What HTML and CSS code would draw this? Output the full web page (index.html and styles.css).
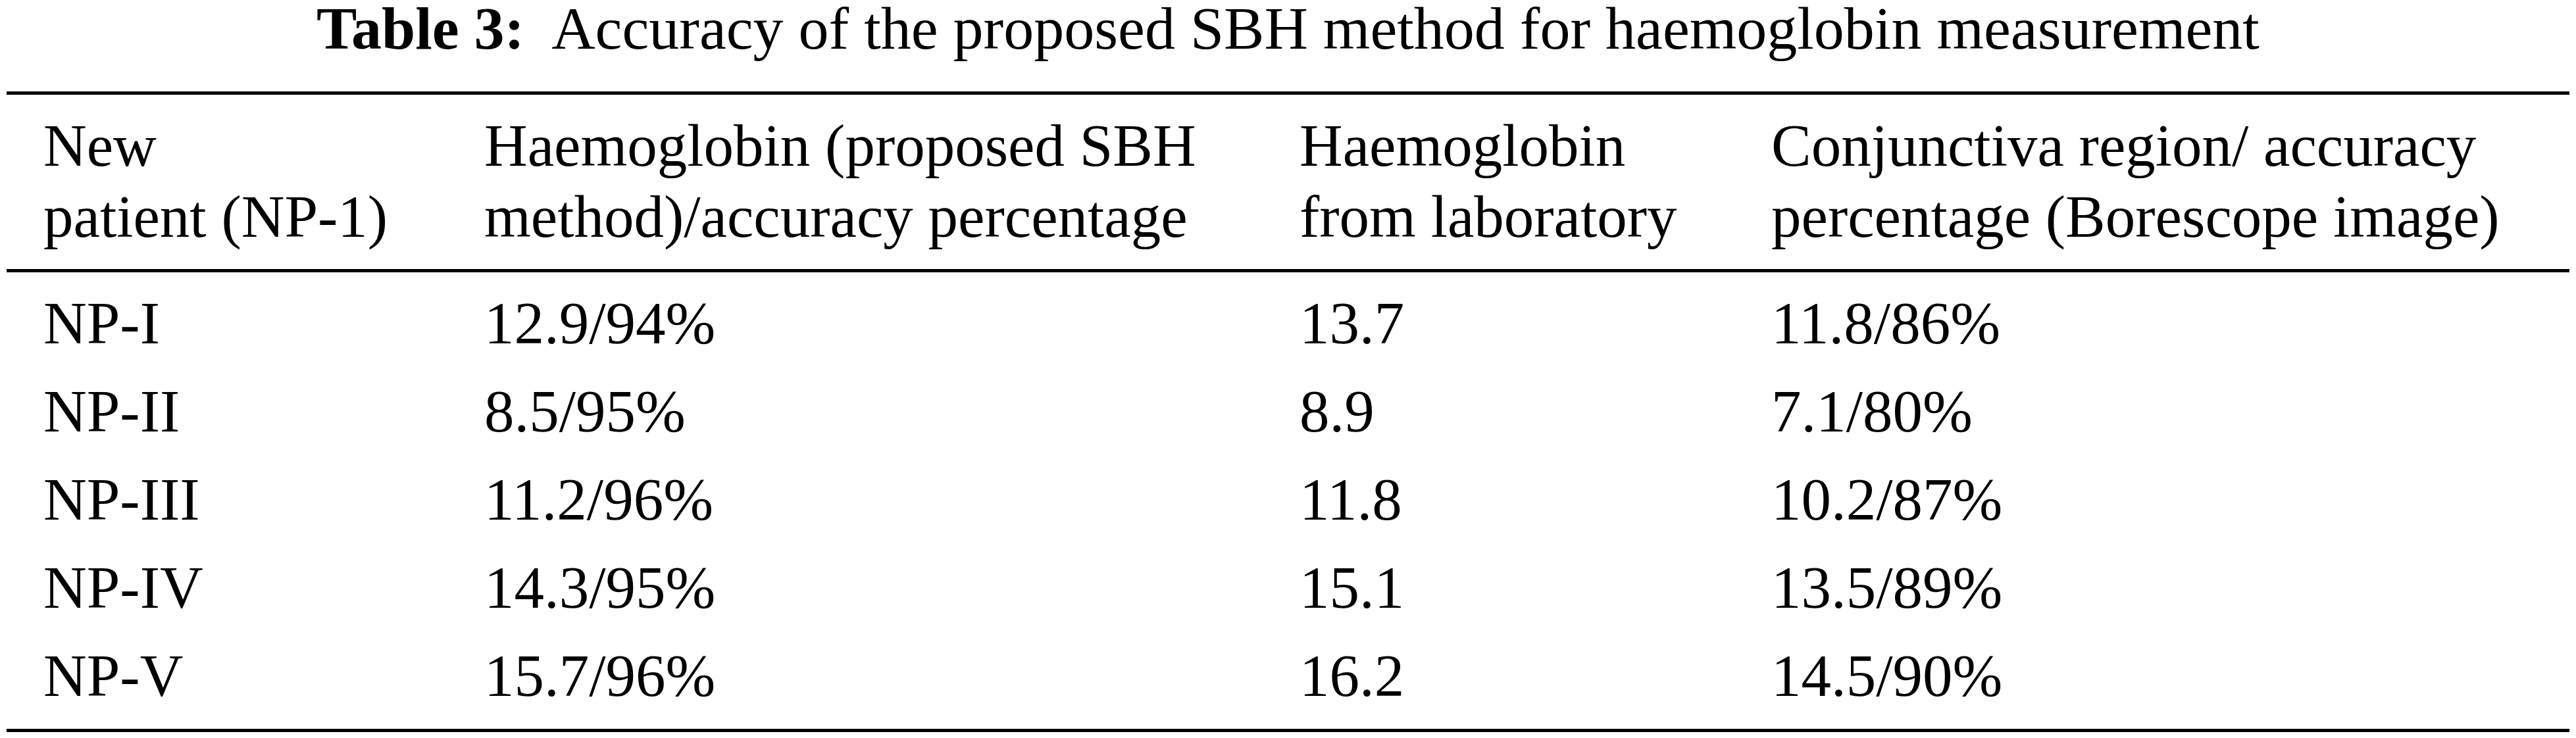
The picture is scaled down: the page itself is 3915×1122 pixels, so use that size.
FILE: index.html
```html
<!DOCTYPE html>
<html>
<head>
<meta charset="utf-8">
<link rel="stylesheet" href="styles.css">
</head>
<body>
<div class="page">
  <div class="caption"><span class="label">Table 3:</span> Accuracy of the proposed SBH method for haemoglobin measurement</div>
  <div class="table">
    <div class="head">
      <div class="cell">New<br>patient (NP-1)</div>
      <div class="cell">Haemoglobin (proposed SBH<br>method)/accuracy percentage</div>
      <div class="cell">Haemoglobin<br>from laboratory</div>
      <div class="cell">Conjunctiva region/ accuracy<br>percentage (Borescope image)</div>
    </div>
    <div class="body">
      <div class="row"><div class="cell">NP-I</div><div class="cell">12.9/94%</div><div class="cell">13.7</div><div class="cell">11.8/86%</div></div>
      <div class="row"><div class="cell">NP-II</div><div class="cell">8.5/95%</div><div class="cell">8.9</div><div class="cell">7.1/80%</div></div>
      <div class="row"><div class="cell">NP-III</div><div class="cell">11.2/96%</div><div class="cell">11.8</div><div class="cell">10.2/87%</div></div>
      <div class="row"><div class="cell">NP-IV</div><div class="cell">14.3/95%</div><div class="cell">15.1</div><div class="cell">13.5/89%</div></div>
      <div class="row"><div class="cell">NP-V</div><div class="cell">15.7/96%</div><div class="cell">16.2</div><div class="cell">14.5/90%</div></div>
    </div>
  </div>
</div>
</body>
</html>
```

FILE: styles.css
```css
html, body {
  margin: 0;
  padding: 0;
  background: #ffffff;
}

body {
  width: 3915px;
  height: 1122px;
  overflow: hidden;
  font-family: "Liberation Serif", "Times New Roman", serif;
  font-size: 91px;
  color: #000000;
}

.page {
  display: flex;
  flex-direction: column;
}

.caption {
  text-align: center;
  font-size: 92px;
  line-height: 86px;
  height: 86px;
  margin: 0 0 53px 0;
  white-space: nowrap;
}

.label {
  font-weight: bold;
  margin-right: 0.25em;
}

.table {
  margin: 0 10px;
  border-top: 5px solid #000;
  border-bottom: 5px solid #000;
}

.head,
.row {
  display: grid;
  grid-template-columns: 670px 1239px 717px 1259px;
}

.head {
  padding: 24px 0 25px 0;
  border-bottom: 5px solid #000;
  line-height: 108px;
}

.body {
  padding: 11px 0 13px 0;
}

.row {
  line-height: 134px;
  height: 134px;
}

.cell {
  padding-left: 56px;
  white-space: nowrap;
}
```
